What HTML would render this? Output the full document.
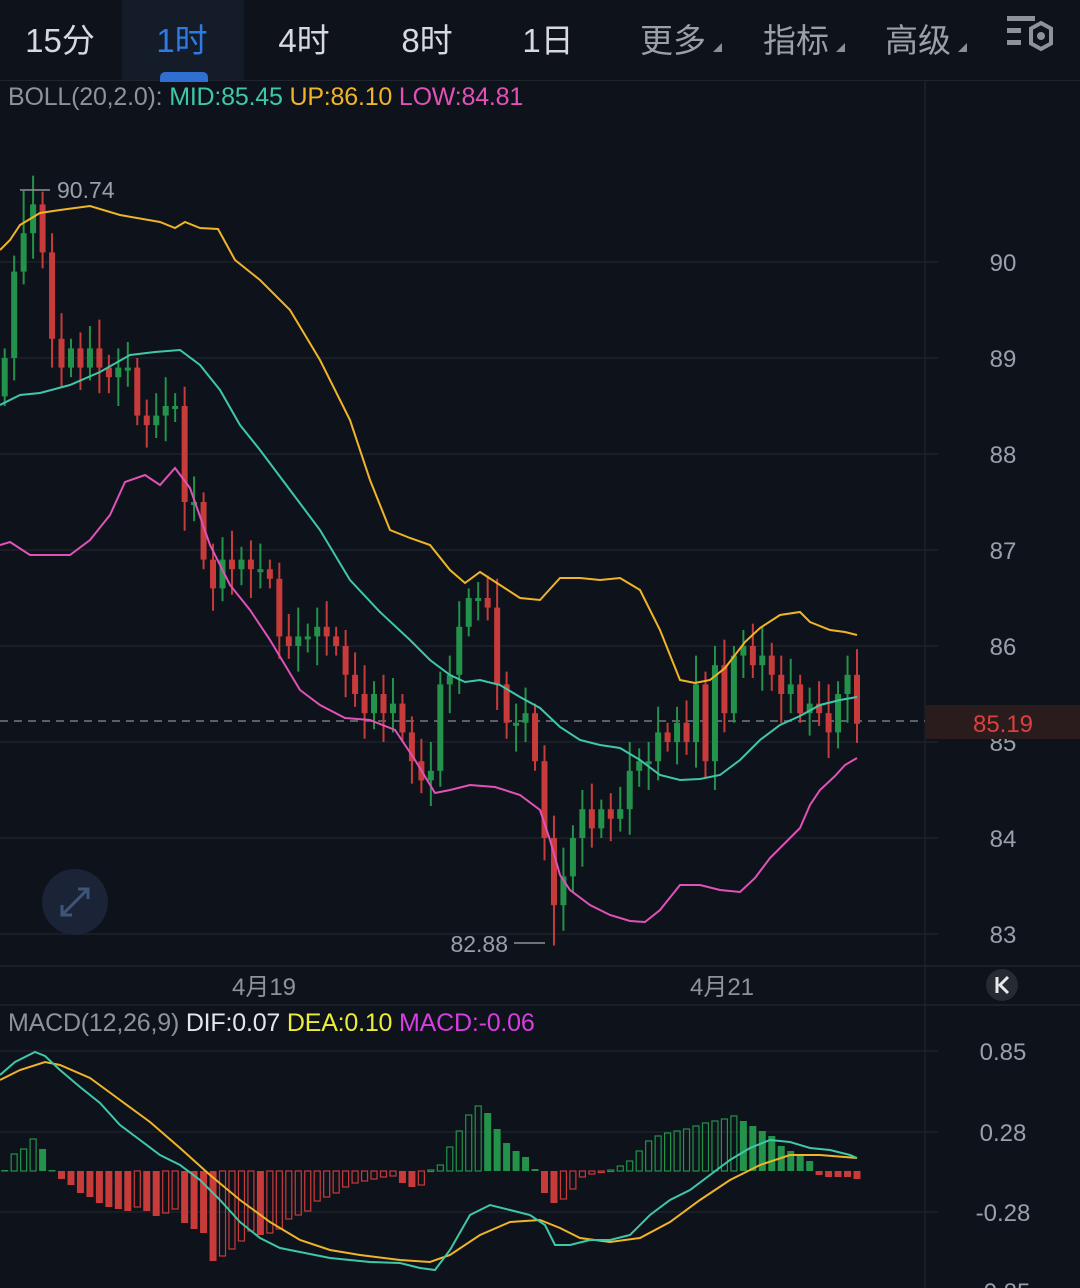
<!DOCTYPE html>
<html><head><meta charset="utf-8">
<style>
html,body{margin:0;padding:0;background:#0e121a;width:1080px;height:1288px;overflow:hidden;font-family:"Liberation Sans","Noto Sans CJK SC",sans-serif}
.hdr{position:absolute;left:0;top:0;width:1080px;height:80px;border-bottom:1px solid #1f242d}
.tab{position:absolute;top:14px;font-size:33px;color:#d6d9de;transform:translateX(-50%);white-space:nowrap}
.g{color:#9ba0a8}
.tri{position:absolute;width:0;height:0;border-left:9px solid transparent;border-bottom:9px solid #8a8f97}
</style></head><body>
<div class="hdr">
<div style="position:absolute;left:122px;top:0;width:122px;height:80px;background:#141c2a"></div>
<div style="position:absolute;left:160px;top:72px;width:48px;height:10px;border-radius:5px 5px 0 0;background:#2f6fd0"></div>
<div class="tab" style="left:60px">15分</div>
<div class="tab" style="left:182px;color:#2f7be6">1时</div>
<div class="tab" style="left:304px">4时</div>
<div class="tab" style="left:427px">8时</div>
<div class="tab" style="left:548px">1日</div>
<div class="tab g" style="left:673px">更多</div><div class="tri" style="left:713px;top:43px"></div>
<div class="tab g" style="left:796px">指标</div><div class="tri" style="left:836px;top:43px"></div>
<div class="tab g" style="left:918px">高级</div><div class="tri" style="left:958px;top:43px"></div>
<svg style="position:absolute;left:1005px;top:14px" width="50" height="40" viewBox="0 0 50 40">
<rect x="2" y="2" width="28" height="5" fill="#8e939b"/><rect x="2" y="14" width="14" height="5" fill="#8e939b"/><rect x="2" y="26" width="14" height="5" fill="#8e939b"/>
<polygon points="36,9 46,14.5 46,29.5 36,35 26,29.5 26,14.5" fill="none" stroke="#8e939b" stroke-width="4"/><circle cx="36" cy="22" r="4" fill="#8e939b"/>
</svg>
</div>

<svg id="ch" style="position:absolute;left:0;top:0" width="1080" height="1288"></svg>

<div style="position:absolute;left:8px;top:83px;font-size:25px;letter-spacing:-0.2px;white-space:nowrap"><span style="color:#8e939b">BOLL(20,2.0): </span><span style="color:#3fc8a8">MID:85.45 </span><span style="color:#f0b429">UP:86.10 </span><span style="color:#e052b8">LOW:84.81</span></div>
<div style="position:absolute;left:8px;top:1009px;font-size:25px;letter-spacing:-0.2px;white-space:nowrap"><span style="color:#8e939b">MACD(12,26,9) </span><span style="color:#e4e6ea">DIF:0.07 </span><span style="color:#ecec3c">DEA:0.10 </span><span style="color:#d63ee0">MACD:-0.06</span></div>

<script>
var s='';
var ns=document.getElementById('ch');
var SP=9.47;
function ln(x1,y1,x2,y2,c,w,d){s+='<line x1="'+x1+'" y1="'+y1+'" x2="'+x2+'" y2="'+y2+'" stroke="'+c+'" stroke-width="'+(w||1)+'"'+(d?' stroke-dasharray="'+d+'"':'')+'/>';}
function tx(x,y,t,c,sz,a){s+='<text x="'+x+'" y="'+y+'" fill="'+c+'" font-size="'+(sz||24)+'" text-anchor="'+(a||'middle')+'" font-family="Liberation Sans, Noto Sans CJK SC, sans-serif">'+t+'</text>';}
var gl=[262,358,454,550,646,742,838,934];
gl.forEach(function(y){ln(0,y,938,y,'#1c212a',1.5);});
ln(925,80,925,1288,'#1c212a',1.5);
ln(0,966,1080,966,'#1f242d',1.5);
ln(0,1005,1080,1005,'#1f242d',1.5);
[1051,1132,1212].forEach(function(y){ln(0,y,938,y,'#1c212a',1.5);});
var lab=['90','89','88','87','86','85','84','83'];
gl.forEach(function(y,i){tx(1003,y+9,lab[i],'#9aa0aa',24);});
tx(1003,1060,'0.85','#9aa0aa',24);tx(1003,1141,'0.28','#9aa0aa',24);tx(1003,1221,'-0.28','#9aa0aa',24);tx(1003,1300,'-0.85','#9aa0aa',24);
tx(264,995,'4月19','#8e939b',24);tx(722,995,'4月21','#8e939b',24);
ln(0,721,925,721,'#5a5f68',2,'8,6');
s+='<rect x="926" y="705" width="154" height="34" fill="#2a1c1d"/>';
tx(1003,732,'85.19','#d9403f',24);
s+='<circle cx="1002" cy="985" r="16" fill="#262a32"/>';
s+='<path d="M997 977 V993 M1008 977 L1000 985 L1008 993" stroke="#e8e8e8" stroke-width="3" fill="none"/>';
s+='<circle cx="75" cy="902" r="33" fill="#1a2436"/>';
s+='<path d="M62 915 L88 889 M78 889 H88 V899 M62 905 V915 H72" stroke="#3d5578" stroke-width="3" fill="none"/>';
function Y(p){return 262+(90-p)*96;}
var C=[89.0,89.9,90.3,90.6,90.1,89.2,88.9,89.1,88.9,89.1,88.9,88.8,88.9,88.9,88.4,88.3,88.4,88.5,88.5,87.5,87.5,86.9,86.6,86.9,86.8,86.9,86.8,86.8,86.7,86.1,86.0,86.1,86.1,86.2,86.1,86.0,85.7,85.5,85.3,85.5,85.3,85.4,85.1,84.8,84.6,84.7,85.6,85.7,86.2,86.5,86.5,86.4,85.6,85.2,85.2,85.3,84.8,84.0,83.3,83.6,84.0,84.3,84.1,84.3,84.2,84.3,84.7,84.8,84.8,85.1,85.0,85.2,85.0,85.6,84.8,85.8,85.3,85.9,86.0,85.8,85.9,85.7,85.5,85.6,85.3,85.4,85.3,85.1,85.5,85.7,85.19];
var prev=88.6;
for(var i=0;i<C.length;i++){
 var x=4.7+i*SP,o=prev,c=C[i];prev=c;
 var up=c>=o,col=up?'#23924b':'#c83b3b';
 var hi=Math.max(o,c)+0.1+((i*37)%7)/30,lo=Math.min(o,c)-0.1-((i*53)%7)/30;
 if(i==2)hi=90.74;if(i==58)lo=82.88;
 ln(x,Y(hi),x,Y(lo),col,2);
 var y1=Y(Math.max(o,c)),h=Math.max(Y(Math.min(o,c))-y1,3);
 s+='<rect x="'+(x-3)+'" y="'+y1+'" width="6" height="'+h+'" fill="'+col+'"/>';
}
ln(20,190,50,190,'#8e939b',1.5);tx(57,198,'90.74','#9aa0aa',23,'start');
ln(514,943,545,943,'#8e939b',1.5);tx(508,952,'82.88','#9aa0aa',23,'end');
function pl(pts,c){s+='<polyline points="'+pts+'" fill="none" stroke="'+c+'" stroke-width="2"/>';}
pl('0,250 10,240 20,225 40,213 60,210 90,206 120,215 160,222 175,228 185,222 200,228 218,229 235,260 260,280 290,310 320,360 350,420 370,480 390,530 410,538 430,545 450,570 465,583 480,572 500,585 520,598 540,600 560,578 580,578 600,580 620,578 640,590 660,630 680,680 695,683 710,680 725,668 745,642 760,628 780,615 800,612 810,622 830,630 845,632 857,635','#f0b429');
pl('0,405 20,395 40,393 70,385 100,372 130,355 155,352 180,350 200,365 220,390 240,425 260,450 290,490 320,530 350,580 380,612 410,640 430,660 450,675 465,682 480,680 500,685 520,697 540,708 560,727 580,740 600,745 620,748 640,760 660,775 680,780 700,779 720,775 740,760 760,740 780,725 800,716 820,705 840,700 857,697','#3fc8a8');
pl('0,545 10,542 30,555 70,555 90,540 110,515 125,482 145,475 160,485 175,468 190,488 210,545 230,585 250,610 270,640 285,665 300,690 320,705 345,718 370,720 395,730 415,760 435,793 450,790 470,785 495,787 520,795 540,810 550,840 560,875 570,890 590,905 610,915 630,921 645,922 660,910 680,885 700,885 720,890 740,892 755,878 770,858 790,838 800,828 810,805 820,790 835,776 845,765 857,758','#e052b8');
var H=[1,17,22,32,22,1,-8,-14,-22,-26,-32,-36,-38,-40,-36,-40,-45,-42,-38,-52,-58,-62,-90,-85,-78,-70,-60,-64,-62,-58,-48,-44,-40,-30,-26,-22,-16,-12,-10,-8,-6,-5,-12,-16,-14,1,6,24,40,56,65,58,42,28,20,14,2,-22,-32,-28,-18,-6,-3,-1,1,5,10,20,30,35,38,40,42,45,48,50,52,55,50,45,40,35,25,20,15,10,-4,-6,-6,-6,-8];
var Z=1171;
for(var i=0;i<H.length;i++){var x=4.7+i*SP,h=H[i];var col=h>=0?'#23924b':'#c83b3b';
 var hollow=(h>=0&&i>0&&H[i]>H[i-1])||(h<0&&i>0&&h>H[i-1]);
 var y=h>=0?Z-h:Z,hh=Math.max(Math.abs(h),1.5);
 if(hollow) s+='<rect x="'+(x-3)+'" y="'+y+'" width="6" height="'+hh+'" fill="none" stroke="'+col+'" stroke-width="1.2"/>';
 else s+='<rect x="'+(x-3.5)+'" y="'+y+'" width="7" height="'+hh+'" fill="'+col+'"/>';}
pl('0,1080 20,1070 45,1062 60,1065 90,1078 120,1100 150,1122 180,1148 210,1175 240,1200 270,1222 300,1240 330,1250 360,1255 400,1260 430,1262 450,1255 480,1235 510,1222 540,1220 560,1228 580,1238 610,1242 640,1238 670,1222 700,1200 730,1180 760,1165 790,1155 820,1155 857,1158','#f0b429');
pl('0,1075 15,1062 35,1052 45,1056 60,1070 80,1087 100,1103 120,1125 140,1140 160,1155 180,1165 200,1180 220,1200 240,1222 260,1238 280,1248 300,1252 330,1258 370,1262 400,1263 420,1268 435,1270 450,1250 470,1215 490,1205 510,1210 530,1215 545,1225 555,1245 570,1245 590,1240 610,1240 630,1235 650,1215 670,1200 690,1190 710,1175 730,1160 750,1148 770,1140 790,1142 810,1148 830,1150 850,1155 857,1158','#3fc8a8');
ns.innerHTML=s;
</script>
</body></html>
